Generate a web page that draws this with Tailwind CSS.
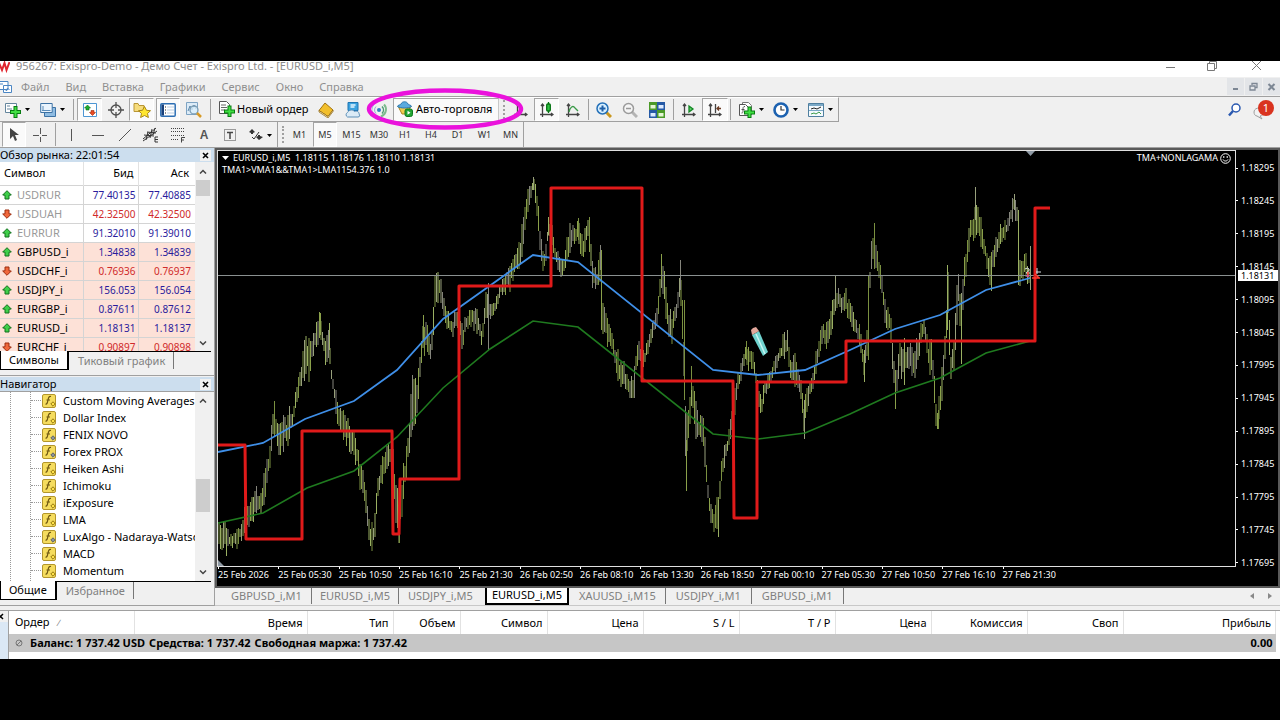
<!DOCTYPE html>
<html lang="ru">
<head>
  <meta charset="UTF-8" />
  <meta name="viewport" content="width=device-width, initial-scale=1.0" />
  <title>956267: Exispro-Demo - EURUSD_i,M5</title>
  <script src="https://cdn.jsdelivr.net/npm/@tailwindcss/browser@4"></script>
</head>
<body class="h-screen overflow-hidden bg-black py-[61px] font-['Noto_Sans',sans-serif] text-[11px] leading-[16px] text-black">
<div class="flex h-full flex-col bg-[#f0f0f0]">

  <!-- Title bar -->
  <header class="flex h-4 shrink-0 items-center overflow-hidden bg-white text-[#8c8c8c]">
    <svg class="h-4 w-[10px]" viewBox="0 0 10 16" fill="none" stroke="#e0262e" stroke-width="2"><path d="M-1 2l3 7 2.500-7 2 7 3-8" /></svg>
    <h1 class="ml-[6px] flex-1 truncate pb-[6px]">956267: Exispro-Demo - Демо Счет - Exispro Ltd. - [EURUSD_i,M5]</h1>
    <button aria-label="Свернуть" class="mr-[30px] mb-[5px]"><svg class="h-[11px] w-[11px]" viewBox="0 0 11 11" stroke="#777"><path d="M1 6.500h9" /></svg></button>
    <button aria-label="Развернуть" class="mr-[34px] mb-[5px]"><svg class="h-[11px] w-[11px]" viewBox="0 0 11 11" fill="none" stroke="#777"><path d="M1.500 2.500h7v7h-7zM3.500 2V.5h7v7H9" /></svg></button>
    <button aria-label="Закрыть" class="mr-[18px] mb-[5px]"><svg class="h-[11px] w-[11px]" viewBox="0 0 11 11" stroke="#777"><path d="M1 0l9 9M10 0L1 9" /></svg></button>
  </header>

  <!-- Menu -->
  <nav class="flex h-5 shrink-0 items-center border-b border-[#a0a0a0] text-[#8f8f8f]">
    <svg class="h-[14px] w-[13px]" viewBox="0 0 13 14" fill="#fff" stroke="#4b86c4"><path d="M-2 1.500h10v8h-10zM3.500 5.500h8v7h-8z" /><path d="M5 9l1.500 2 1-3 2 2M0 4h3" fill="none" /></svg>
    <div class="ml-2 flex gap-4">
      <a href="#">Файл</a>
      <a href="#">Вид</a>
      <a href="#">Вставка</a>
      <a href="#">Графики</a>
      <a href="#">Сервис</a>
      <a href="#">Окно</a>
      <a href="#">Справка</a>
    </div>
    <div class="ml-auto flex gap-px">
      <button aria-label="Свернуть окно" class="flex h-[17px] w-[17px] items-center justify-center bg-[#e3e5e8]"><svg class="h-[9px] w-[9px]" viewBox="0 0 9 9" stroke="#7d8794" stroke-width="2"><path d="M2 7h5" /></svg></button>
      <button aria-label="Восстановить окно" class="flex h-[17px] w-[17px] items-center justify-center bg-[#e3e5e8]"><svg class="h-[9px] w-[9px]" viewBox="0 0 9 9" fill="none" stroke="#7d8794"><path d="M1 4h5v4H1zM3 3V1.500h5V5.500H6.500" stroke-width="1.300" /></svg></button>
      <button aria-label="Закрыть окно" class="flex h-[17px] w-[17px] items-center justify-center bg-[#e3e5e8]"><svg class="h-[9px] w-[9px]" viewBox="0 0 9 9" stroke="#7d8794" stroke-width="2"><path d="M1.500 2l6 6M7.500 2l-6 6" /></svg></button>
    </div>
  </nav>

  <!-- Main toolbar -->
  <div class="relative flex h-[25px] shrink-0 items-stretch">
    <div class="flex items-stretch border-t border-b border-t-white border-b-[#a0a0a0] border-r border-r-[#a0a0a0]">
      <button aria-label="Новый график" class="flex w-9 items-center gap-1 pl-[5px]">
        <svg class="h-4 w-4" viewBox="0 0 16 16"><path d="M.5 1.500h11v9H.5z" fill="#fff" stroke="#64859c" /><path d="M2 4h3M2 7h5" stroke="#64859c" /><path d="M8.500 4h4v4H16v4h-3.500v4h-4v-4H5V8h3.500z" fill="#087c12" /><path d="M9.500 5h2v4H15v2h-3.500v4h-2v-4H6V9h3.500z" fill="#41e043" /></svg>
        <svg class="h-[3px] w-[5px]" viewBox="0 0 5 3"><path d="M0 0h5L2.500 3z" /></svg>
      </button>
      <button aria-label="Профили" class="flex w-[34px] items-center gap-1 pl-1">
        <svg class="h-4 w-4" viewBox="0 0 16 16"><path d="M4.500 5.500h11v9h-11z" fill="#8fbce2" stroke="#3d72a4" /><path d="M.7 1.500h11.500v9H.7z" fill="#e9f4fd" stroke="#3d72a4" /><path d="M2 8.500h8.500M3 4v5" stroke="#5b8cb8" /></svg>
        <svg class="h-[3px] w-[5px]" viewBox="0 0 5 3"><path d="M0 0h5L2.500 3z" /></svg>
      </button>
      <span class="my-px mx-[3px] w-px bg-[#a0a0a0]"></span>
      <button aria-label="Обзор рынка" class="flex w-[25px] items-center justify-center border border-[#a5a5a5] border-r-white border-b-white bg-[#fafafa]">
        <svg class="h-4 w-4" viewBox="0 0 16 16"><path d="M1.500 1.500h13v13h-13z" fill="#fff" stroke="#4d96d3" /><path d="M5.500 3L8.500 6H7v2H4V6H2.500z" fill="#1fae30" stroke="#0d6b18" stroke-width=".6" /><path d="M10.500 13.500l-3-3H9v-2h3v2h1.500z" fill="#ea4a22" stroke="#9c2c0e" stroke-width=".6" /></svg>
      </button>
      <button aria-label="Окно данных" class="flex w-[27px] items-center justify-center">
        <svg class="h-4 w-4" viewBox="0 0 16 16" fill="none" stroke="#505050" stroke-width="1.300"><circle cx="8" cy="8" r="5" /><path d="M8 0v6M8 10v6M0 8h6M10 8h6" /></svg>
      </button>
      <button aria-label="Навигатор" class="flex w-[25px] items-center justify-center border border-[#a5a5a5] border-r-white border-b-white bg-[#fafafa]">
        <svg class="h-4 w-[18px]" viewBox="0 0 18 16"><path d="M1 1.500h4l1 2h5v6H1z" fill="#f6dc7c" stroke="#b99636" /><path d="M11.500 4.500l2 3.800 4 .4-3 2.800.9 4-3.900-2-3.900 2 .9-4-3-2.800 4-.4z" fill="#ffe62e" stroke="#a88615" /></svg>
      </button>
      <button aria-label="Терминал" class="ml-[2px] flex w-6 items-center justify-center border border-[#a5a5a5] border-r-white border-b-white bg-[#fafafa]">
        <svg class="h-4 w-4" viewBox="0 0 16 16"><rect x=".8" y="1.800" width="14.400" height="12.400" rx="1" fill="#fff" stroke="#2d6fb4" stroke-width="1.500" /><path d="M1.500 2.500h2.500v11H1.500z" fill="#173f7a" /><path d="M5 5h1M5 8h1M5 11h1" stroke="#222" /><path d="M7 5h7M7 8h7M7 11h7" stroke="#b9cde2" /></svg>
      </button>
      <button aria-label="Тестер стратегий" class="flex w-7 items-center justify-center">
        <svg class="h-4 w-4" viewBox="0 0 16 16" fill="none"><path d="M.5.5h11v12H.5z" fill="#dcebf7" stroke="#7da3c3" /><path d="M2 9l2-5 2 4 2-5 2 4" stroke="#5a87ab" /><circle cx="8" cy="8" r="4" fill="#d9effb" fill-opacity=".8" stroke="#7a9cb4" stroke-width="1.300" /><path d="M11 11l4 4" stroke="#d79a26" stroke-width="2.500" /></svg>
      </button>
      <span class="my-px mx-[2px] w-px bg-[#a0a0a0]"></span>
      <button class="flex w-[99px] items-center gap-[2px] pb-px pl-[6px] whitespace-nowrap">
        <svg class="h-4 w-4" viewBox="0 0 16 16"><path d="M.5.5h7l3 3v9H.5z" fill="#fff" stroke="#555" /><path d="M2 4h5M2 6.500h6M2 9h4" stroke="#666" /><path d="M8.500 4.500h4v4H16v4h-3.500V16h-4v-3.500H5v-4h3.500z" fill="#087c12" /><path d="M9.500 5.500h2v4H15v2h-3.500V15h-2v-3.500H6v-2h3.500z" fill="#41e043" /></svg>
        Новый ордер
      </button>
      <button aria-label="MetaEditor" class="flex w-7 items-center justify-center">
        <svg class="h-4 w-4" viewBox="0 0 16 16"><path d="M1 8.500L7 1l8 7-5 6.500z" fill="#f2bf2c" stroke="#a3730f" /><path d="M1 8.500L10 14.500l5-6.500v1.500L10 16 1 10z" fill="#fbeeb4" stroke="#8a5f0a" stroke-width=".7" /></svg>
      </button>
      <button aria-label="Маркет" class="flex w-[26px] items-center justify-center">
        <svg class="h-4 w-4" viewBox="0 0 16 16"><path d="M3 .5h10v8H3z" fill="#3ba2df" stroke="#1d75b3" /><path d="M5.500 3h5M5.500 5h4" stroke="#e6f6ff" stroke-width="1.300" /><path d="M2.500 15a2.500 2.500 0 010-4.500c1-2.500 5-3.500 7-1 3-1 5 1 4.500 2.500 1 1 1 3-1 3z" fill="#dcebf6" stroke="#5c8fb8" /></svg>
      </button>
      <button aria-label="Сигналы" class="flex w-[27px] items-center justify-center">
        <svg class="h-4 w-4" viewBox="0 0 16 16" fill="none"><circle cx="7" cy="8" r="2" fill="#2f7fc4" /><path d="M4 4.500a5 5 0 000 7M2 2.500a8 8 0 000 11" stroke="#8db8d5" /><path d="M10 4.500a5 5 0 010 7" stroke="#4c9b72" stroke-width="1.500" /><path d="M12 2.500c3 3 3 9-3 12" stroke="#7dbb8d" stroke-width="2" /></svg>
      </button>
      <button aria-pressed="true" class="flex w-[106px] items-center gap-[3px] border border-[#a5a5a5] border-r-[#c8c8c8] border-b-white bg-[#fafafa] pb-px pl-[3px] whitespace-nowrap">
        <svg class="h-4 w-4" viewBox="0 0 16 16"><path d="M1 5h13l-4 8H5z" fill="#f0cb4e" stroke="#ab8420" /><path d="M.5 5.500C1 3.500 4 4 4 3c1-3 6-3 7 0 0 1 3 .5 3.500 2.500-3 2-11 2-14 0z" fill="#5aaadf" stroke="#2b76ad" /><rect x="8" y="8" width="7.500" height="7.500" rx="2" fill="#22a533" stroke="#0e7a1c" /><path d="M10.500 9.800v4l3-2z" fill="#fff" /></svg>
        Авто-торговля
      </button>
      <span class="my-[2px] ml-1 mr-[3px] w-[2px] border-l-2 border-dotted border-[#a0a0a0]"></span>
      <button aria-label="Бары" class="flex w-[26px] items-center justify-center">
        <svg class="h-4 w-[14px]" viewBox="0 0 14 16" fill="none" stroke="#444" stroke-width="1.300"><path d="M3.500 1v14M0 12.500h13M2 3l1.500-2L5 3M11 11l2 1.500-2 1.500" /></svg>
      </button>
      <button aria-label="Японские свечи" class="flex w-[25px] items-center justify-center border border-[#a5a5a5] border-r-white border-b-white bg-[#fafafa]">
        <svg class="h-4 w-[14px]" viewBox="0 0 14 16" fill="none" stroke="#444" stroke-width="1.300"><path d="M2.500 2v13M0 12.500h13M1 4l1.500-2L4 4M11 11l2 1.500-2 1.500" /><path d="M8.500 0v11" stroke="#067413" /><rect x="6.700" y="2" width="3.600" height="7" rx="1" fill="#2fc143" stroke="#067413" /></svg>
      </button>
      <button aria-label="Линия" class="ml-px flex w-[26px] items-center justify-center">
        <svg class="h-4 w-[14px]" viewBox="0 0 14 16" fill="none" stroke="#444" stroke-width="1.300"><path d="M2.500 2v13M0 12.500h13M1 4l1.500-2L4 4M11 11l2 1.500-2 1.500" /><path d="M3 10c1-5 4-7 6-4l3 3" stroke="#3a9a48" /></svg>
      </button>
      <span class="my-px mx-[2px] w-px bg-[#a0a0a0]"></span>
      <button aria-label="Увеличить" class="flex w-[26px] items-center justify-center">
        <svg class="h-4 w-4" viewBox="0 0 16 16" fill="none"><path d="M10 10l5 5" stroke="#c9971f" stroke-width="3" /><circle cx="6.500" cy="6.500" r="5.500" fill="#d9f0ff" stroke="#2470b8" stroke-width="1.500" /><path d="M3.500 6.500h6M6.500 3.500v6" stroke="#1f5fa8" stroke-width="2" /></svg>
      </button>
      <button aria-label="Уменьшить" class="flex w-[26px] items-center justify-center">
        <svg class="h-4 w-4" viewBox="0 0 16 16" fill="none"><path d="M10 10l5 5" stroke="#b4b4b4" stroke-width="3" /><circle cx="6.500" cy="6.500" r="5" fill="#f5f5f5" stroke="#9b9b9b" stroke-width="1.500" /><path d="M4 6.500h5" stroke="#999" stroke-width="1.500" /></svg>
      </button>
      <button aria-label="Расположить окна" class="flex w-7 items-center justify-center">
        <svg class="h-4 w-4" viewBox="0 0 16 16"><path d="M0 0h8v8H0zM8 8h8v8H8z" fill="#4b9a28" /><path d="M8 0h8v8H8zM0 8h8v8H0z" fill="#2559a5" /><path d="M1.500 3h5v3.500h-5zM9.500 11h5v3.500h-5z" fill="#e4f6d4" /><path d="M9.500 3h5v3.500h-5zM1.500 11h5v3.500h-5z" fill="#dceaff" /></svg>
      </button>
      <span class="my-px mx-[2px] w-px bg-[#a0a0a0]"></span>
      <button aria-label="Автопрокрутка" class="flex w-[26px] items-center justify-center">
        <svg class="h-4 w-[14px]" viewBox="0 0 14 16" fill="none" stroke="#444" stroke-width="1.300"><path d="M2.500 2v13M0 12.500h13M1 4l1.500-2L4 4M11 11l2 1.500-2 1.500" /><path d="M7 4v6l4-3z" fill="#5fd06c" stroke="#128623" /></svg>
      </button>
      <button aria-label="Сдвиг графика" class="flex w-[26px] items-center justify-center border border-[#a5a5a5] border-r-white border-b-white bg-[#fafafa]">
        <svg class="h-4 w-[14px]" viewBox="0 0 14 16" fill="none" stroke="#444" stroke-width="1.300"><path d="M2.500 2v13M0 12.500h13M1 4l1.500-2L4 4M11 11l2 1.500-2 1.500M7.500 2v9" /><path d="M13 6.500H9M11 4.500l-2 2 2 2" stroke="#6b3a22" /></svg>
      </button>
      <span class="my-px mx-[2px] w-px bg-[#a0a0a0]"></span>
      <button aria-label="Индикаторы" class="flex w-[34px] items-center gap-1 pl-[6px]">
        <svg class="h-4 w-4" viewBox="0 0 16 16" fill="none"><path d="M3.500.5h6l3 3v9h-9z" fill="#fff" stroke="#777" /><path d="M.5 2.500h6l3 3v8h-9z" fill="#fff" stroke="#555" /><path d="M6 4.500c-2 0-2 1-2 3.500s0 3-1.500 3M2.500 7.500h3" stroke="#555" /><path d="M8.500 4.500h4v4H16v4h-3.500V16h-4v-3.500H5v-4h3.500z" fill="#087c12" /><path d="M9.500 5.500h2v4H15v2h-3.500V15h-2v-3.500H6v-2h3.500z" fill="#41e043" /></svg>
        <svg class="h-[3px] w-[5px]" viewBox="0 0 5 3"><path d="M0 0h5L2.500 3z" /></svg>
      </button>
      <button aria-label="Периоды" class="flex w-[35px] items-center gap-1 pl-[6px]">
        <svg class="h-4 w-4" viewBox="0 0 16 16" fill="none"><circle cx="8" cy="8" r="6.500" fill="#fff" stroke="#1d62b0" stroke-width="2.600" /><path d="M8 4v4h3.500" stroke="#333" stroke-width="1.200" /></svg>
        <svg class="h-[3px] w-[5px]" viewBox="0 0 5 3"><path d="M0 0h5L2.500 3z" /></svg>
      </button>
      <button aria-label="Шаблоны" class="flex w-[36px] items-center gap-1 pl-[6px]">
        <svg class="h-4 w-4" viewBox="0 0 16 16" fill="none"><path d="M.5 1.500h15v13H.5z" fill="#f4fafe" stroke="#4f7f9f" /><path d="M1 3h14" stroke="#7ba9c7" stroke-width="2" /><path d="M3 7l3-1 3 1 4-2" stroke="#222" /><path d="M1 8.500h14" stroke="#7ba9c7" /><path d="M3 12l3-1 2 1 3-2 2 2" stroke="#3a9a48" /></svg>
        <svg class="h-[3px] w-[5px]" viewBox="0 0 5 3"><path d="M0 0h5L2.500 3z" /></svg>
      </button>
    </div>
    <div class="ml-auto flex items-center gap-3 pr-[6px]">
      <button aria-label="Поиск"><svg class="h-[14px] w-[13px]" viewBox="0 0 13 14" fill="none" stroke="#2958b0"><circle cx="8" cy="5" r="4" fill="#fff" stroke-width="1.500" /><path d="M5 8l-4 4.500" stroke-width="2.500" /></svg></button>
      <button aria-label="Уведомления" class="relative h-5 w-[21px]">
        <svg class="h-5 w-5" viewBox="0 0 20 20"><path d="M1 12c0-3 3-4 5-4s5 2 5 4-2 4-4 4l2 3-5-3c-2 0-3-2-3-4z" fill="#f2f2f2" stroke="#9d9d9d" /></svg>
        <span class="absolute right-0 top-0 h-4 w-4 rounded-full bg-[#d9331f] text-center text-[11px] leading-4 text-white">1</span>
      </button>
    </div>
    <!-- Marker drawn round the auto trading button -->
    <svg class="pointer-events-none absolute -top-[8px] left-[366px] h-[43px] w-[157px] overflow-visible" viewBox="0 0 157 43" fill="none"><ellipse cx="79" cy="20" rx="76" ry="18.500" stroke="#ea12dc" stroke-width="4.500" /></svg>
  </div>

  <!-- Drawing tools and timeframes -->
  <div class="flex h-[25px] shrink-0 items-stretch text-[9px] text-[#333]">
    <button aria-label="Курсор" class="ml-[2px] flex w-6 items-center justify-center border border-[#a5a5a5] border-r-white border-b-white bg-[#fafafa]"><svg class="h-4 w-[10px]" viewBox="0 0 10 16"><path d="M1 1v11l3-3 2 5 2-1-2-5h4z" fill="#444" /></svg></button>
    <button aria-label="Перекрестие" class="flex w-[28px] items-center justify-center"><svg class="h-[14px] w-[14px]" viewBox="0 0 14 14" stroke="#555"><path d="M7.500 0v6M7.500 9v5M0 7.500h6M9 7.500h5" /></svg></button>
    <span class="my-px mx-px w-px bg-[#a0a0a0]"></span>
    <button aria-label="Вертикальная линия" class="flex w-[27px] items-center justify-center pt-px"><svg class="h-3 w-3" viewBox="0 0 12 12" stroke="#555"><path d="M6.500 0v12" /></svg></button>
    <button aria-label="Горизонтальная линия" class="flex w-[27px] items-center justify-center pt-px"><svg class="h-3 w-3" viewBox="0 0 12 12" stroke="#555"><path d="M0 6.500h12" /></svg></button>
    <button aria-label="Трендовая линия" class="flex w-[27px] items-center justify-center pt-px"><svg class="h-3 w-3" viewBox="0 0 12 12" stroke="#555"><path d="M0 12L12 0" /></svg></button>
    <button aria-label="Канал" class="flex w-[26px] items-center justify-center pt-px"><svg class="h-4 w-4" viewBox="0 0 16 16" fill="none" stroke="#333"><path d="M0 12L13 1M1 8l10 1M4 5l9 1M0 14L14 4M3 13l2-8M7 11l2-9M10 8l2-7" /><path d="M15 10h-3v5h3M12 12.500h3" /></svg></button>
    <button aria-label="Фибоначчи" class="flex w-[27px] items-center justify-center pt-px"><svg class="h-4 w-4" viewBox="0 0 16 16" fill="none" stroke="#444"><path d="M1 1.500h13M1 4.500h13M1 8.500h13M1 12.500h8" stroke-dasharray="1 1" /><path d="M11.500 15.500v-5H15M11.500 13H14" /></svg></button>
    <button class="w-[26px] pt-px font-['Liberation_Sans',sans-serif] text-xs font-bold text-[#555]">A</button>
    <button aria-label="Текстовая метка" class="flex w-[26px] items-center justify-center pt-px"><svg class="h-3 w-3" viewBox="0 0 12 12" fill="none" stroke="#444"><path d="M.5.5h11v11H.5z" stroke-dasharray="1 1" /><path d="M3 3.500h6M6 3v7" stroke-width="1.500" /></svg></button>
    <button aria-label="Стрелки" class="flex w-[34px] items-center gap-1 pt-px pl-[6px]"><svg class="h-3 w-[14px]" viewBox="0 0 14 12" fill="#333"><path d="M3 0l3 3-2 1v1H2V4L0 3zM6 5l2-2M10 11l-3-3 2-1V6h2v1l3 1z" /><path d="M3 8l2 2 5-7" fill="none" stroke="#333" /></svg><svg class="h-[3px] w-[5px]" viewBox="0 0 5 3"><path d="M0 0h5L2.500 3z" /></svg></button>
    <span class="w-px bg-[#a0a0a0]"></span>
    <span class="my-1 ml-1 mr-[2px] w-[2px] border-l-2 border-dotted border-[#a0a0a0]"></span>
    <button class="w-[27px] pt-px">M1</button>
    <button aria-pressed="true" class="w-6 border border-[#a5a5a5] border-r-white border-b-white bg-[#fafafa] pt-px">M5</button>
    <button class="w-[29px] pt-px">M15</button>
    <button class="w-[26px] pt-px">M30</button>
    <button class="w-[26px] pt-px">H1</button>
    <button class="w-[26px] pt-px">H4</button>
    <button class="w-[27px] pt-px">D1</button>
    <button class="w-[27px] pt-px">W1</button>
    <button class="w-[25px] pt-px">MN</button>
    <span class="w-px bg-[#a0a0a0]"></span>
  </div>

  <!-- Work area -->
  <div class="flex min-h-0 flex-1 border-t border-[#a0a0a0]">
    <aside class="flex w-[215px] shrink-0 flex-col">

      <!-- Market watch -->
      <section class="flex h-[228px] shrink-0 flex-col border-b border-r border-[#a0a0a0]">
        <div class="flex h-[14px] items-center bg-[#ccdeee] pr-[3px] leading-[14px]">
          <h2 class="flex-1">Обзор рынка: 22:01:54</h2>
          <button aria-label="Закрыть обзор рынка" class="bg-[#f0f0f0] p-[2px]"><svg class="h-[7px] w-[7px]" viewBox="0 0 7 7" stroke="#000" stroke-width="1.600"><path d="M1 1l5 5M6 1L1 6" /></svg></button>
        </div>
        <div class="mr-[3px] flex min-h-0 flex-1 border-b border-black">
          <div class="flex-1 overflow-hidden bg-white">
            <table class="w-full table-fixed border-collapse">
              <colgroup><col class="w-[83px]" /><col class="w-[55px]" /><col /></colgroup>
              <thead>
                <tr class="h-[23px] border-b border-[#d4d4d4]">
                  <th class="border-r border-[#e2e2e2] pl-1 text-left font-normal">Символ</th>
                  <th class="border-r border-[#e2e2e2] pr-1 text-right font-normal">Бид</th>
                  <th class="pr-[6px] text-right font-normal">Аск</th>
                </tr>
              </thead>
              <tbody id="quotes"></tbody>
            </table>
          </div>
          <div class="flex w-4 flex-col items-center justify-between pt-[7px] pb-[5px]">
            <svg class="h-[5px] w-2" viewBox="0 0 8 5" fill="none" stroke="#444" stroke-width="1.500"><path d="M1 4.500l3-3 3 3" /></svg>
            <span class="mb-auto mt-[6px] h-4 w-[14px] bg-[#cdcdcd]"></span>
            <svg class="h-[5px] w-2" viewBox="0 0 8 5" fill="none" stroke="#444" stroke-width="1.500"><path d="M1 .5l3 3 3-3" /></svg>
          </div>
        </div>
        <div class="flex h-[23px] items-start">
          <button class="-mt-px h-[19px] border border-t-0 border-r-2 border-black bg-white px-2">Символы</button>
          <button class="ml-[9px] h-[17px] border-r border-[#777] pr-2 text-[#808080]">Тиковый график</button>
        </div>
      </section>

      <!-- Navigator -->
      <section class="flex min-h-0 flex-1 flex-col border-b border-r border-[#a0a0a0]">
        <div class="mt-px flex h-[15px] shrink-0 items-center border-b border-[#a0a0a0] bg-[#ccdeee] pr-[3px] leading-[14px]">
          <h2 class="flex-1">Навигатор</h2>
          <button aria-label="Закрыть навигатор" class="bg-[#f0f0f0] p-[2px]"><svg class="h-[7px] w-[7px]" viewBox="0 0 7 7" stroke="#000" stroke-width="1.600"><path d="M1 1l5 5M6 1L1 6" /></svg></button>
        </div>
        <div class="mr-[3px] flex min-h-0 flex-1 border-b border-black">
          <div class="min-w-0 flex-1 overflow-hidden bg-white pl-[10px]">
            <div class="h-full border-l border-dotted border-[#999] pl-[19px]">
              <ul id="tree" class="h-full border-l border-dotted border-[#999]"></ul>
            </div>
          </div>
          <div class="flex w-4 flex-col items-center py-[6px]">
            <svg class="h-[5px] w-2" viewBox="0 0 8 5" fill="none" stroke="#444" stroke-width="1.500"><path d="M1 4.500l3-3 3 3" /></svg>
            <span class="mb-auto mt-[76px] h-[33px] w-[14px] bg-[#cdcdcd]"></span>
            <svg class="h-[5px] w-2" viewBox="0 0 8 5" fill="none" stroke="#444" stroke-width="1.500"><path d="M1 .5l3 3 3-3" /></svg>
          </div>
        </div>
        <div class="flex h-[23px] shrink-0 items-start">
          <button class="-mt-px h-[19px] border border-t-0 border-r-2 border-black bg-white px-2">Общие</button>
          <button class="ml-[9px] h-[17px] border-r border-[#777] pr-2 text-[#808080]">Избранное</button>
        </div>
      </section>
    </aside>

    <main class="flex min-w-0 flex-1 flex-col">
      <!-- Chart window -->
      <section class="relative flex min-h-0 flex-1 border-2 border-[#5a5a5a] bg-black text-[9px] leading-3 text-white">
        <div class="flex min-w-0 flex-1 flex-col">
          <div class="relative min-h-0 flex-1 border border-[#e0e0e0]">
            <svg class="absolute inset-0 h-full w-full" viewBox="218 151 1017 415" preserveAspectRatio="none" fill="none">
              <g id="bars"></g>
              <path d="M218 275.500h1017" stroke="#8a9090" />
              <path d="M218 523L263 513 307 488 354 471 397 437 443 388 490 349 533 321 578 327 713 434 758 439 805 433 850 414 895 393 940 378 986 353 1030 341" stroke="#1f7a1f" stroke-width="1.600" />
              <path d="M218 452L263 443 305 419 354 401 397 370 443 319 516 267 533 255 578 262 713 370 758 375 805 370 850 350 895 329 940 315 986 290 1030 278" stroke="#3f8fe8" stroke-width="1.800" />
              <path d="M218 445H245L246 539H302V431H392L393 534H399L400 479H459V286H551V188H642V381H733L734 518H757V382H846V341H1035V208H1050" stroke="#e01a1a" stroke-width="3" stroke-linejoin="round" />
              <path d="M1026 151h9l-4.500 5z" fill="#8f9aa5" />
              <path d="M218 560l6 6h-6z" fill="#8f9aa5" />
              <!-- Order arrows at the current price -->
              <path d="M1025 269q3-2 4 0t-3 4h4M1037 268v6M1036 272h5" stroke="#d8dde2" />
              <path d="M1028 272v5M1032 278h8M1035 274l4 4" stroke="#ff3b2f" stroke-width="1.500" />
              <path d="M1026 276h3" stroke="#c44ccf" />
              <!-- Pencil cursor -->
              <path d="M752 335l7-4 9 21-5 4z" fill="#6fd3cf" /><path d="M756 334l9 20" stroke="#c9f5f2" stroke-width="1.500" /><path d="M752 335l-1-5 2-2 3-1 3 4z" fill="#e2a79b" />
            </svg>
            <div class="relative flex justify-between px-1 pt-px">
              <div>
                <div class="flex items-center gap-1"><svg class="h-1 w-[7px]" viewBox="0 0 7 4"><path d="M0 0h7L3.500 4z" fill="#fff" /></svg><span class="whitespace-pre">EURUSD_i,M5  1.18115 1.18176 1.18110 1.18131</span></div>
                <p>TMA1&gt;VMA1&amp;&amp;TMA1&gt;LMA1154.376 1.0</p>
              </div>
              <div class="flex items-center gap-[2px] self-start">TMA+NONLAGAMA
                <svg class="h-[11px] w-[11px]" viewBox="0 0 11 11" fill="none" stroke="#fff"><circle cx="5.500" cy="5.500" r="4.800" /><path d="M3 6.500c1 2 4 2 5 0M3.800 3v2M7.200 3v2" /></svg>
              </div>
            </div>
          </div>
          <div id="times" class="grid h-[19px] w-[calc(100%+8px)] shrink-0 grid-cols-17 whitespace-nowrap pl-px"></div>
        </div>
        <div id="prices" class="flex w-[42px] shrink-0 flex-col justify-between pt-3 pb-[17px]"></div>
        <div class="absolute right-0 top-[120px] h-[11px] w-[40px] bg-white pl-[3px] leading-[11px] text-black">1.18131</div>
      </section>

      <!-- Chart tabs -->
      <div class="flex h-[18px] shrink-0 items-start border-b border-[#c8c8c8] text-[#808080]">
        <button class="ml-4 h-4 border-r border-[#777] pr-[9px]">GBPUSD_i,M1</button>
        <button class="h-4 border-r border-[#777] px-2">EURUSD_i,M5</button>
        <button class="h-4 pl-[9px] pr-3">USDJPY_i,M5</button>
        <button class="-mt-px h-[18px] border-2 border-t-0 border-black bg-white px-[5px] text-black">EURUSD_i,M5</button>
        <button class="h-4 border-r border-[#777] pl-[10px] pr-[9px]">XAUUSD_i,M15</button>
        <button class="h-4 border-r border-[#777] pl-[10px] pr-[10px]">USDJPY_i,M1</button>
        <button class="h-4 border-r border-[#777] pl-[10px] pr-[10px]">GBPUSD_i,M1</button>
        <div class="ml-auto mr-2 flex gap-[14px] pt-1">
          <svg class="h-2 w-1" viewBox="0 0 4 8"><path d="M4 1v6L0 4z" fill="#888" /></svg>
          <svg class="h-2 w-1" viewBox="0 0 4 8"><path d="M0 1v6l4-3z" fill="#888" /></svg>
        </div>
      </div>
    </main>
  </div>

  <!-- Terminal -->
  <section class="mt-1 flex h-[49px] shrink-0 border-t border-[#a0a0a0]">
    <div class="w-[9px] shrink-0 border-r border-[#a0a0a0] bg-[#dbe8f5]"><div class="bg-[#f0f0f0] py-px"><svg class="h-[9px] w-1" viewBox="0 0 4 9" stroke="#000" stroke-width="1.500" fill="none"><path d="M-2 2l5 5M3 2l-5 5" /></svg></div></div>
    <div class="min-w-0 flex-1 bg-white pr-1">
      <table class="w-full table-fixed border-collapse whitespace-nowrap">
        <colgroup><col class="w-[125px]" /><col class="w-[173px]" /><col class="w-[86px]" /><col class="w-[67px]" /><col class="w-[87px]" /><col class="w-[96px]" /><col class="w-[96px]" /><col class="w-[96px]" /><col class="w-[96px]" /><col class="w-[96px]" /><col class="w-[96px]" /><col /></colgroup>
        <thead>
          <tr id="orderHead" class="h-[23px]"></tr>
        </thead>
        <tbody>
          <tr class="h-[18px] bg-[#c6c6c6] font-bold">
            <td colspan="11" class="pl-[6px]">
              <div class="flex items-center gap-[7px]"><svg class="h-2 w-2" viewBox="0 0 8 8" fill="none" stroke="#777"><circle cx="4" cy="4" r="3" /><path d="M2 6l4-4" /></svg><span class="flex gap-1"><span>Баланс: 1 737.42 USD</span><span>Средства: 1 737.42</span><span>Свободная маржа: 1 737.42</span></span></div>
            </td>
            <td class="pr-[3px] text-right">0.00</td>
          </tr>
        </tbody>
      </table>
    </div>
  </section>
</div>

<script>
  const quotes = [
    ['USDRUR', '77.40135', '77.40885', 1, 0],
    ['USDUAH', '42.32500', '42.32500', 0, 0],
    ['EURRUR', '91.32010', '91.39010', 1, 0],
    ['GBPUSD_i', '1.34838', '1.34839', 1, 1],
    ['USDCHF_i', '0.76936', '0.76937', 0, 1],
    ['USDJPY_i', '156.053', '156.054', 1, 1],
    ['EURGBP_i', '0.87611', '0.87612', 1, 1],
    ['EURUSD_i', '1.18131', '1.18137', 1, 1],
    ['EURCHF_i', '0.90897', '0.90898', 0, 1],
  ];
  const up = '<svg class="h-[10px] w-[10px]" viewBox="0 0 10 10"><path d="M5 .7L9.300 5 7 5.200V9H3V5.200L.7 5z" fill="#3fcf4a" stroke="#13701c" /></svg>';
  const down = '<svg class="h-[10px] w-[10px]" viewBox="0 0 10 10"><path d="M5 9.300L.7 5 3 4.800V1h4v3.800L9.300 5z" fill="#f0683c" stroke="#9c2c0e" /></svg>';
  document.getElementById('quotes').innerHTML = quotes.map(([name, bid, ask, isUp, live]) => `
    <tr class="h-[19px] border-b border-[#d4d4d4] ${live ? 'bg-[#fde1d7]' : 'text-[#999]'}">
      <td class="border-r border-[#d4d4d4] pl-[2px]"><div class="flex items-center gap-[5px]">${isUp ? up : down}${name}</div></td>
      <td class="border-r border-[#d4d4d4] pr-[2px] text-right text-[10px] ${isUp ? 'text-[#2a1b9c]' : 'text-[#d02a2a]'}">${bid}</td>
      <td class="pr-[4px] text-right text-[10px] ${isUp ? 'text-[#2a1b9c]' : 'text-[#d02a2a]'}">${ask}</td>
    </tr>`).join('');

  // second value: grey gear for custom indicators
  const tree = [
    ['Custom Moving Averages', 0], ['Dollar Index', 0], ['FENIX NOVO', 1], ['Forex PROX', 1],
    ['Heiken Ashi', 0], ['Ichimoku', 0], ['iExposure', 0], ['LMA', 0],
    ['LuxAlgo - Nadaraya-Watson', 1], ['MACD', 0], ['Momentum', 0], ['', 0],
  ];
  document.getElementById('tree').innerHTML = tree.map(([name, custom]) => `
    <li class="flex h-[17px] items-center whitespace-nowrap">
      <span class="mr-px w-[10px] shrink-0 border-t border-dotted border-[#999]"></span>
      <svg class="mr-[7px] h-[14px] w-[14px] shrink-0" viewBox="0 0 14 14" fill="none"><rect x=".5" y=".5" width="13" height="13" rx="1.500" fill="#f5dc5e" stroke="#b3962c" /><path d="M9 2.500C7 2 6.500 3.500 6 6s-1 4.500-2.500 4M4.500 6h3.500" stroke="#6d5610" stroke-width="1.200" /><path d="M11 7.800l2.200 2.200L11 12.200 8.800 10z" fill="${custom ? '#8d949b' : '#ffe24a'}" stroke="${custom ? '#5c636a' : '#94780f'}" /></svg>${name}
    </li>`).join('');

  const times = ['25 Feb 2026', '25 Feb 05:30', '25 Feb 10:50', '25 Feb 16:10', '25 Feb 21:30', '26 Feb 02:50', '26 Feb 08:10', '26 Feb 13:30', '26 Feb 18:50', '27 Feb 00:10', '27 Feb 05:30', '27 Feb 10:50', '27 Feb 16:10', '27 Feb 21:30'];
  document.getElementById('times').innerHTML = times.map((t) => `<div><div class="h-[2px] w-px bg-white"></div>${t}</div>`).join('');

  let prices = '';
  for (let p = 118295; p >= 117695; p -= 50) {
    prices += `<div class="flex items-center gap-[3px]"><span class="h-px w-[2px] bg-white"></span>${(p / 100000).toFixed(5)}</div>`;
  }
  document.getElementById('prices').innerHTML = prices;

  const heads = ['Время', 'Тип', 'Объем', 'Символ', 'Цена', 'S / L', 'T / P', 'Цена', 'Комиссия', 'Своп', 'Прибыль'];
  document.getElementById('orderHead').innerHTML =
    '<th class="border-r border-[#e2e2e2] pl-[6px] text-left font-normal">Ордер <span class="ml-[6px] text-[9px] text-[#777]">∕</span></th>' +
    heads.map((h) => `<th class="border-r border-[#e2e2e2] pr-1 text-right font-normal">${h}</th>`).join('');

  // price range by time: x, high, low
  const range = [
    [219,525,550],[224,518,549],[230,535,548],[238,528,544],[243,515,542],[248,502,530],[252,495,525],[256,488,516],[262,487,512],[265,465,500],[268,457,480],[271,430,460],[274,405,430],[278,412,455],[283,414,450],[288,415,445],[293,405,428],[296,388,405],[300,370,390],[305,329,378],[310,340,382],[313,328,355],[320,316,342],[326,340,366],[329,330,358],[331,366,380],[334,380,400],[338,400,426],[343,410,438],[348,412,448],[353,430,458],[358,440,472],[361,463,496],[366,482,513],[369,515,545],[371,522,554],[374,522,545],[378,470,508],[382,455,480],[388,445,465],[392,442,475],[396,470,530],[399,505,543],[402,470,520],[405,455,490],[409,420,458],[413,360,425],[416,380,430],[419,350,400],[423,320,355],[428,325,352],[430,345,370],[433,315,345],[435,273,312],[440,272,297],[445,300,320],[450,318,330],[455,315,335],[458,308,325],[462,328,346],[466,315,330],[472,307,328],[478,310,330],[482,333,345],[486,290,320],[490,300,318],[495,300,314],[500,283,297],[505,276,290],[510,262,285],[516,250,275],[521,232,262],[526,192,222],[530,183,197],[533,178,194],[536,188,203],[538,200,225],[541,238,268],[544,255,268],[548,222,240],[551,216,245],[555,245,260],[560,255,277],[564,256,275],[570,227,250],[575,224,244],[578,219,243],[583,235,260],[588,222,236],[590,240,265],[593,255,292],[597,268,290],[600,250,285],[603,298,333],[607,315,345],[612,333,352],[616,350,373],[620,360,380],[625,368,388],[630,378,398],[634,372,403],[637,335,365],[641,345,365],[645,350,366],[650,330,345],[655,315,330],[658,298,320],[661,256,290],[665,272,310],[668,308,335],[672,310,340],[676,300,325],[680,264,300],[683,298,345],[685,365,430],[686,430,488],[688,400,440],[692,372,408],[696,400,438],[700,415,448],[704,410,448],[707,465,498],[710,500,520],[714,506,533],[718,495,524],[722,455,480],[727,435,458],[731,420,436],[735,385,410],[740,368,385],[745,345,365],[750,350,365],[755,364,376],[758,384,408],[762,395,414],[765,380,395],[770,368,385],[775,356,374],[780,346,360],[785,335,358],[787,334,350],[790,350,380],[795,356,392],[800,373,395],[804,400,430],[808,380,408],[813,368,390],[817,345,370],[822,325,342],[827,325,345],[831,312,340],[835,282,312],[840,292,310],[845,290,315],[850,300,325],[855,318,335],[860,325,346],[864,350,378],[868,320,350],[871,232,272],[874,226,262],[878,255,280],[882,273,300],[886,300,330],[890,305,335],[895,375,402],[900,345,375],[905,340,378],[910,342,370],[915,350,380],[920,328,346],[924,314,335],[928,338,370],[932,340,368],[936,398,425],[938,410,428],[942,368,400],[945,330,362],[948,268,315],[951,350,385],[955,325,370],[958,258,305],[961,300,350],[965,250,292],[970,213,242],[973,215,240],[976,200,235],[980,213,242],[984,235,252],[988,254,275],[991,255,286],[995,240,263],[1000,225,243],[1005,224,240],[1010,210,225],[1014,197,212],[1017,205,220],[1019,235,285],[1022,264,285],[1025,250,270],[1028,268,290],[1030,250,290],
  ];
  let seed = 11;
  const rnd = () => (seed = (seed * 16807) % 2147483647) / 2147483647;
  const tones = ['#8aa04a', '#98a07c', '#7a9040', '#9ab062', '#85857c'];
  const bar = (x, a, b) => `<path d="M${x} ${a}V${b}" stroke="${tones[Math.floor(rnd() * tones.length)]}" />`;
  let out = '';
  let k = 0;
  for (let x = 219; x <= 1030; x += 1.5) {
    while (k < range.length - 2 && range[k + 1][0] < x) k++;
    const [x0, h0, l0] = range[k];
    const [x1, h1, l1] = range[k + 1];
    const t = (x - x0) / (x1 - x0);
    // every few bars one reaches well past its neighbours
    const reach = rnd() < 0.25 ? 8 : 2;
    const hi = h0 + (h1 - h0) * t - reach * rnd();
    const lo = l0 + (l1 - l0) * t + reach * rnd();
    const size = lo - hi;
    out += bar(x, Math.round(hi + rnd() * size * 0.35), Math.round(lo - rnd() * size * 0.35) + 1);
  }
  // long wicks
  [[274,401,420],[320,313,335],[329,323,350],[399,512,543],[423,315,340],[488,283,350],[533,177,190],[548,217,235],[578,218,240],[589,217,240],[600,245,270],[601,250,330],[661,254,280],[680,260,290],[684,300,400],[686,440,491],[691,366,390],[718,500,537],[746,341,360],[787,330,345],[804,400,439],[835,276,300],[864,350,382],[874,223,250],[868,275,360],[895,370,409],[938,410,429],[961,300,364],[947,265,330],[975,187,220],[991,260,291],[1014,194,210],[1018,210,285],[1030,246,290],
  ].forEach(([x, a, b]) => { out += bar(x + 0.5, a, b); });
  document.getElementById('bars').innerHTML = out;
</script>
</body>
</html>
